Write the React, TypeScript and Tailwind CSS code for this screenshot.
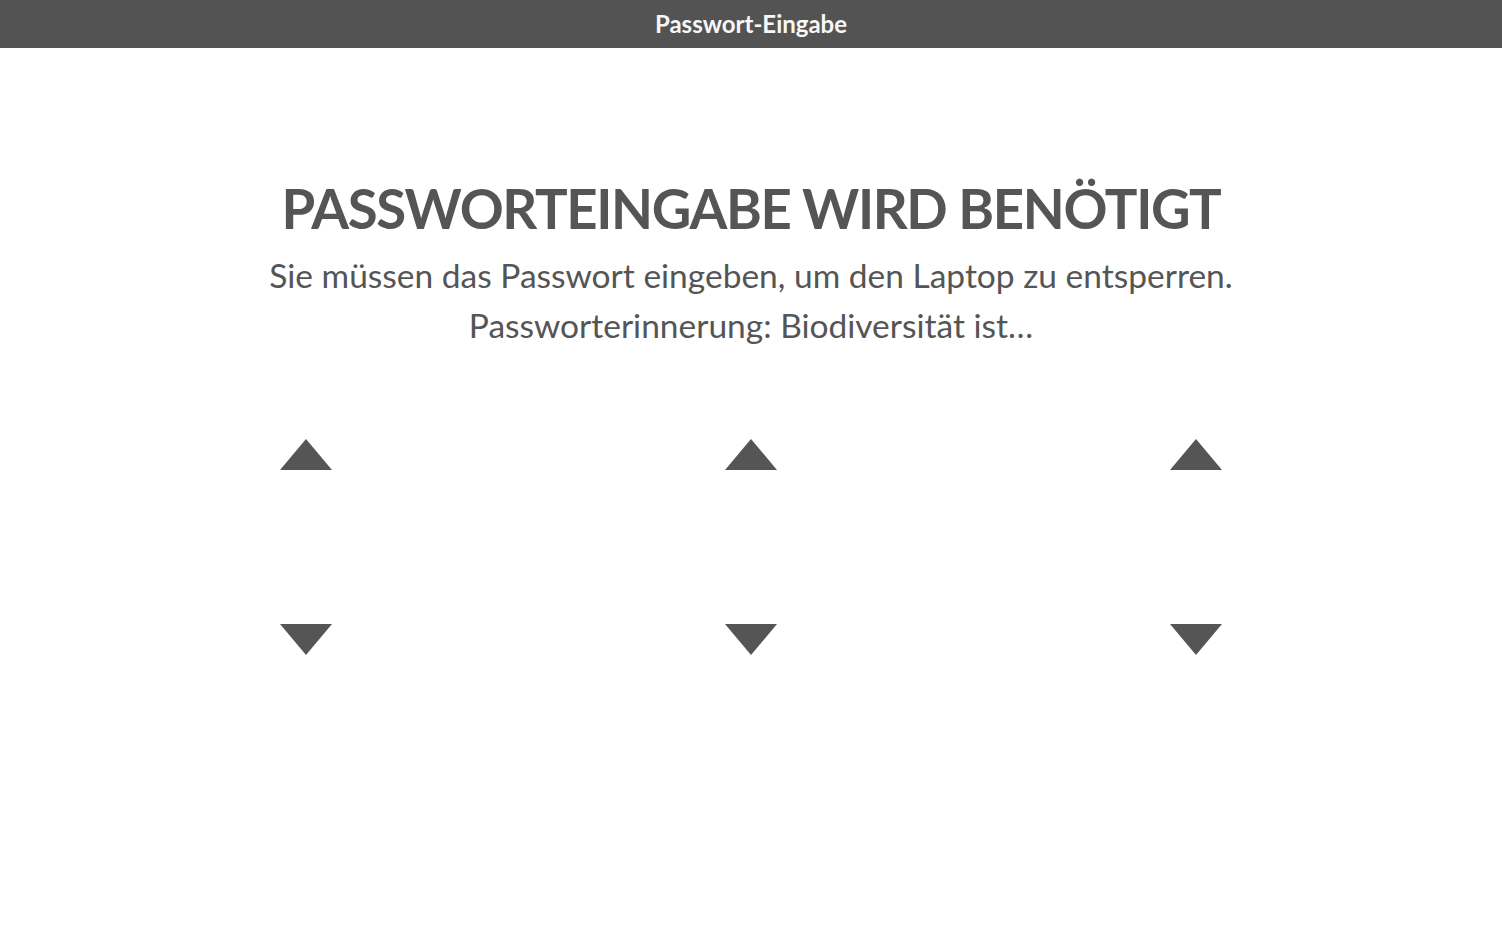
export default function App() {
  const cols = [0, 1, 2];
  return (
    <div className="min-h-screen bg-white text-[#555555]" style={{ fontFamily: "Lato, 'Noto Sans', sans-serif" }}>
      <header className="h-12 bg-[#535353] flex items-center justify-center">
        <span className="text-[#f7f7f7] text-[24px] font-bold">Passwort-Eingabe</span>
      </header>

      <main className="flex flex-col items-center">
        <h1 className="mt-[128px] text-[54.5px] leading-[64px] font-bold tracking-tight">
          PASSWORTEINGABE WIRD BENÖTIGT
        </h1>
        <p className="mt-[10px] text-[33.5px] leading-[50px] text-center">
          Sie müssen das Passwort eingeben, um den Laptop zu entsperren.
          <br />
          Passworterinnerung: Biodiversität ist…
        </p>

        <div className="mt-[89px] w-[942px] flex justify-between">
          {cols.map((c) => (
            <div key={c} className="flex flex-col justify-between h-[216px] w-[52px]">
              <svg width="52" height="31" viewBox="0 0 52 31">
                <polygon points="26,0 52,31 0,31" fill="#555555" />
              </svg>
              <svg width="52" height="31" viewBox="0 0 52 31">
                <polygon points="0,0 52,0 26,31" fill="#555555" />
              </svg>
            </div>
          ))}
        </div>
      </main>
    </div>
  );
}
